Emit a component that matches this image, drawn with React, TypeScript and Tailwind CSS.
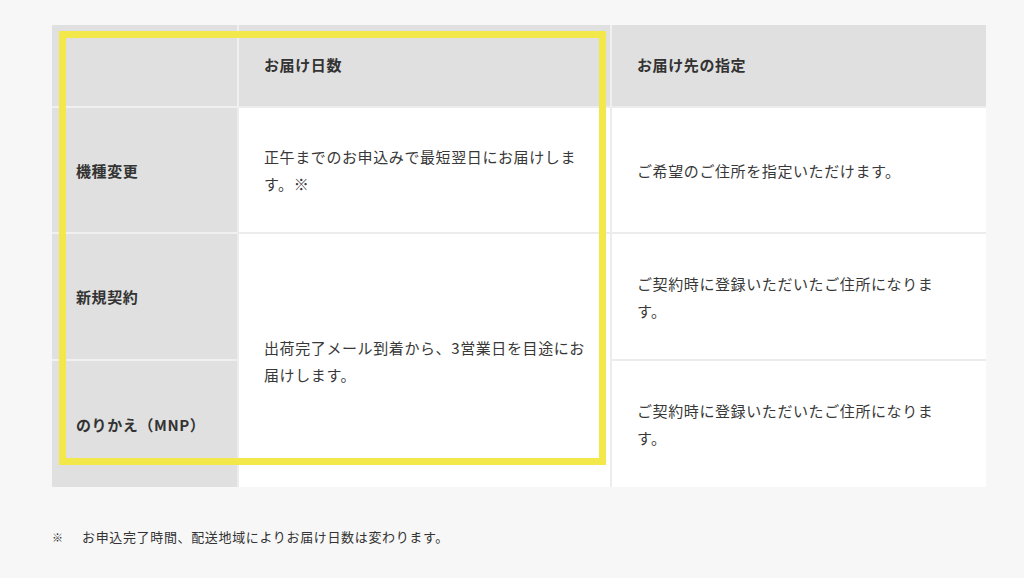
import React from 'react'

const font = { fontFamily: '"Noto Sans CJK JP", "Noto Sans", sans-serif' }

export default function App() {
  return (
    <div className="min-h-[578px] w-[1024px] bg-[#f7f7f7] pl-[52px] pt-[25px] text-[#383838]" style={font}>
      <div className="relative w-[934px]">
        <table className="w-[934px] table-fixed border-collapse">
          <colgroup>
            <col className="w-[186px]" />
            <col className="w-[373px]" />
            <col className="w-[375px]" />
          </colgroup>
          <thead>
            <tr className="h-[82px] bg-[#e0e0e0]">
              <th className="border-r-2 border-[#f0f0f0]"></th>
              <th className="border-r-2 border-[#f0f0f0] pl-[25px] text-left text-[15px] font-bold tracking-[0.6px] text-[#333]">
                お届け日数
              </th>
              <th className="pl-[25px] text-left text-[15px] font-bold tracking-[0.6px] text-[#333]">
                お届け先の指定
              </th>
            </tr>
          </thead>
          <tbody className="text-[15px] leading-[27px] tracking-[0.6px]">
            <tr className="h-[126px]">
              <td className="border-t-2 border-[#f0f0f0] bg-[#e0e0e0] pl-6 font-bold text-[#333]">機種変更</td>
              <td className="border-t-2 border-l-2 border-[#ececec] bg-white px-[25px]">
                正午までのお申込みで最短翌日にお届けします。※
              </td>
              <td className="border-t-2 border-l-2 border-[#ececec] bg-white px-[25px]">
                ご希望のご住所を指定いただけます。
              </td>
            </tr>
            <tr className="h-[127px]">
              <td className="border-t-2 border-[#f0f0f0] bg-[#e0e0e0] pl-6 font-bold text-[#333]">新規契約</td>
              <td rowSpan={2} className="border-t-2 border-l-2 border-[#ececec] bg-white px-[25px]">
                出荷完了メール到着から、3営業日を目途にお届けします。
              </td>
              <td className="border-t-2 border-l-2 border-[#ececec] bg-white px-[25px]">
                ご契約時に登録いただいたご住所になります。
              </td>
            </tr>
            <tr className="h-[127px]">
              <td className="border-t-2 border-[#f0f0f0] bg-[#e0e0e0] pl-6 font-bold text-[#333]">のりかえ（MNP）</td>
              <td className="border-t-2 border-l-2 border-[#ececec] bg-white px-[25px]">
                ご契約時に登録いただいたご住所になります。
              </td>
            </tr>
          </tbody>
        </table>

        {/* highlight frame */}
        <div className="pointer-events-none absolute left-[7px] top-[6px] h-[434px] w-[547px] border-[7px] border-[#f2e84a]"></div>
      </div>

      <div className="mt-[40px] flex items-center text-[13px] leading-[20px] tracking-[0.65px] text-[#333]">
        <span className="w-[30px] text-[11px] font-bold">※</span>
        <span>お申込完了時間、配送地域によりお届け日数は変わります。</span>
      </div>
    </div>
  )
}
